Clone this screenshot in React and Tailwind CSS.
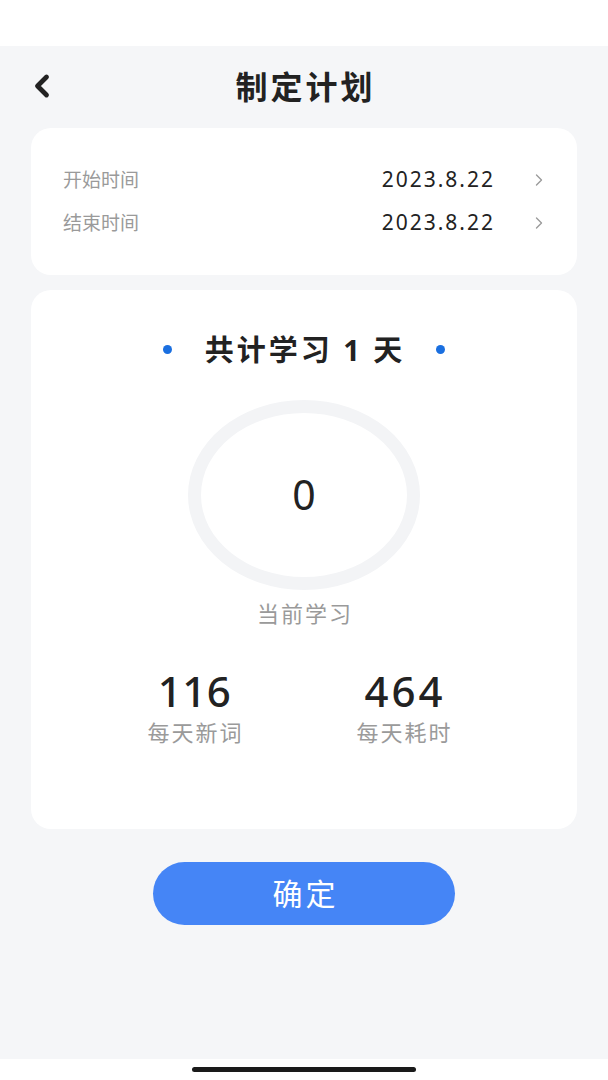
import { ChevronLeft, ChevronRight } from "lucide-react";

const font = { fontFamily: '"Noto Sans", "Noto Sans CJK SC", sans-serif' };

const App = () => {
  const dates = [
    { label: "开始时间", value: "2023.8.22" },
    { label: "结束时间", value: "2023.8.22" },
  ];

  return (
    <div className="w-[608px] h-[1080px] flex flex-col bg-white font-['Noto_Sans','Noto_Sans_CJK_SC',sans-serif]" style={font}>
      {/* status bar */}
      <div className="h-[46px] bg-white" />

      <div className="flex-1 bg-[#f5f6f8] flex flex-col px-[31px]">
        {/* Header */}
        <div className="relative h-[82px] flex items-center justify-center">
          <ChevronLeft className="absolute left-[-7px] top-[22px] w-[36px] h-[36px] text-[#222]" strokeWidth={3.2} />
          <h1 className="text-[32px] font-bold text-[#222] tracking-[3px] pl-[3px]">制定计划</h1>
        </div>

        {/* Date card */}
        <div className="bg-white rounded-[20px] h-[147px] pl-[32px] pr-[28px] flex flex-col justify-center gap-[13px]">
          {dates.map((d) => (
            <div key={d.label} className="flex items-center h-[30px]">
              <span className="text-[19px] text-[#9a9a9a] flex-1">{d.label}</span>
              <span className="text-[21px] text-[#222] tracking-[2px]">{d.value}</span>
              <ChevronRight className="ml-[34px] w-[20px] h-[20px] text-[#9a9a9a]" strokeWidth={1.6} />
            </div>
          ))}
        </div>

        {/* Stats card */}
        <div className="mt-[15px] bg-white rounded-[20px] h-[539px] flex flex-col items-center">
          <div className="mt-[38px] flex items-center">
            <span className="w-[9px] h-[9px] rounded-full bg-[#1a6fe0]" />
            <span className="ml-[33px] mr-[31px] text-[29px] font-bold text-[#222] tracking-[3px]">共计学习 1 天</span>
            <span className="w-[9px] h-[9px] rounded-full bg-[#1a6fe0]" />
          </div>

          <div className="mt-[28px] w-[232px] h-[190px] rounded-[50%] border-[13px] border-[#f3f4f6] flex items-center justify-center">
            <span className="text-[41px] text-[#222]">0</span>
          </div>

          <div className="mt-[7px] text-[22px] text-[#9a9a9a] tracking-[2px] pl-[2px]">当前学习</div>

          <div className="mt-[36px] w-full flex justify-center gap-[109px] pr-[10px]">
            <div className="flex flex-col items-center w-[100px]">
              <span className="text-[42px] leading-[50px] text-[#222] font-medium tracking-[0.5px]">116</span>
              <span className="text-[22px] text-[#9a9a9a] tracking-[2px] pl-[2px]">每天新词</span>
            </div>
            <div className="flex flex-col items-center w-[100px]">
              <span className="text-[42px] leading-[50px] text-[#222] font-medium tracking-[3px] pl-[3px]">464</span>
              <span className="text-[22px] text-[#9a9a9a] tracking-[2px] pl-[2px]">每天耗时</span>
            </div>
          </div>
        </div>

        {/* Confirm */}
        <div className="mt-[33px] flex justify-center">
          <button className="w-[302px] h-[63px] rounded-full bg-[#4585f6] text-white text-[30px] tracking-[3px] pl-[3px] font-normal">
            确定
          </button>
        </div>
      </div>

      {/* home indicator */}
      <div className="h-[21px] bg-white flex justify-center pt-[8px]">
        <div className="w-[224px] h-[5px] rounded-full bg-[#1a1a1a]" />
      </div>
    </div>
  );
};

export default App;
